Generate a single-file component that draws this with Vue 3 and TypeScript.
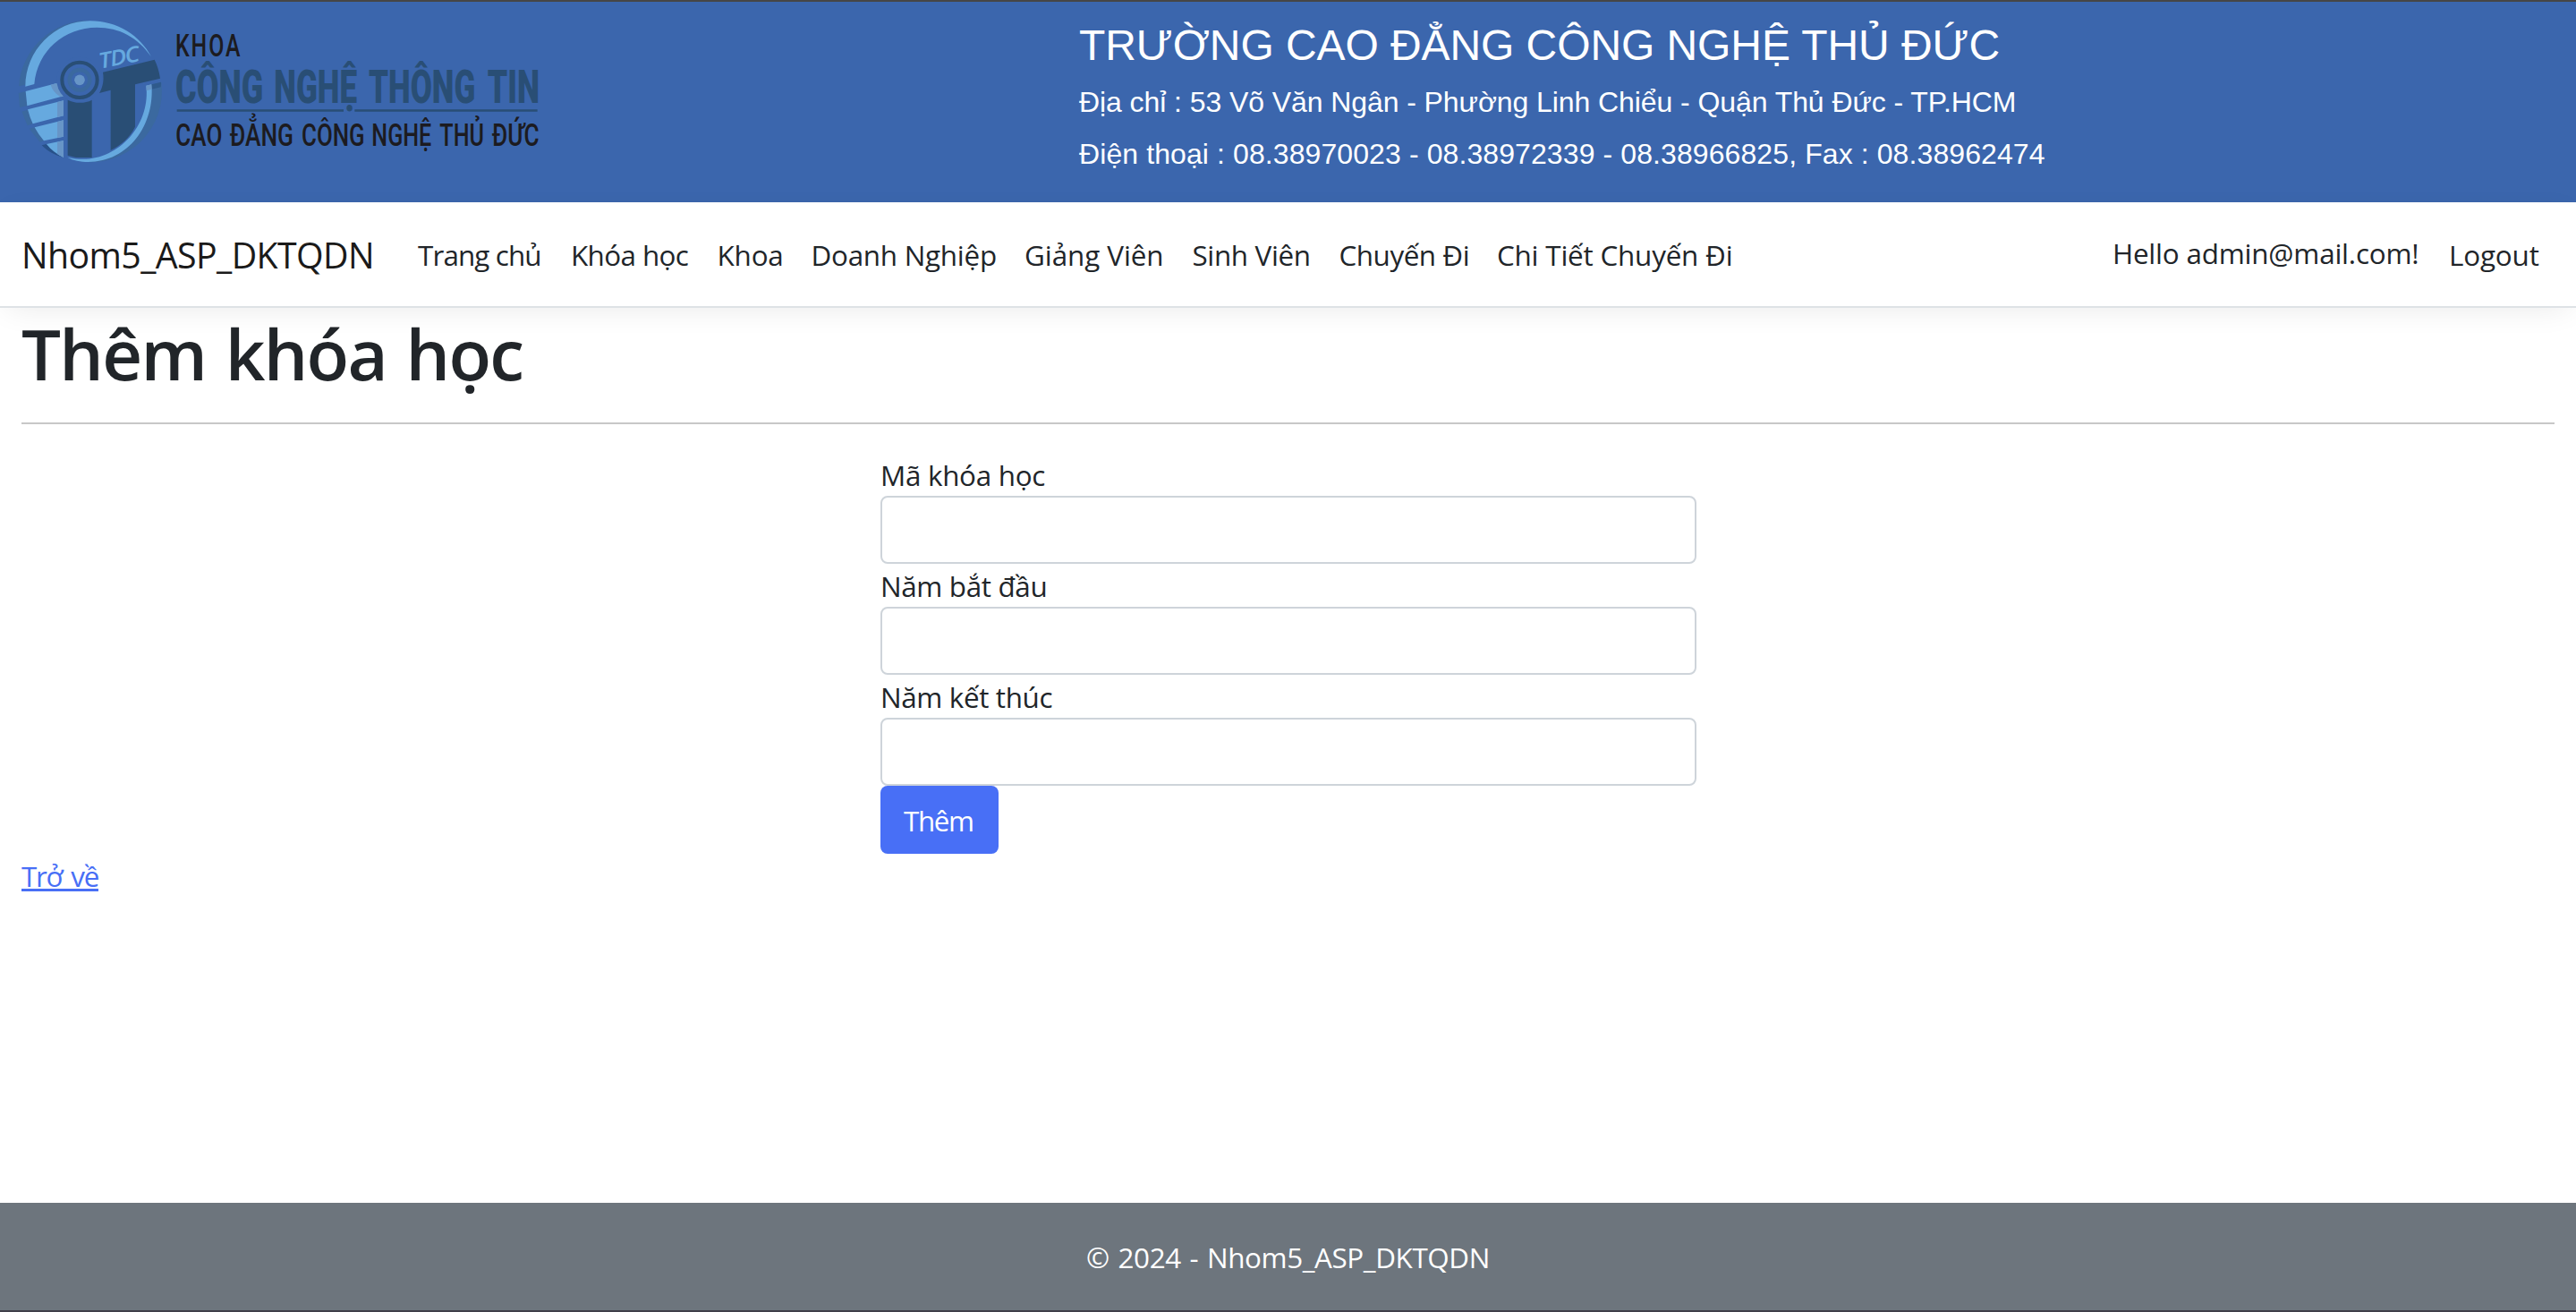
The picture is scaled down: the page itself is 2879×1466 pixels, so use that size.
<script setup lang="ts">
import { ref } from 'vue'

interface NavItem {
  label: string
  width: number
  spacing: number
}

interface Field {
  id: string
  label: string
  spacing: number
}

const navItems: NavItem[] = [
  { label: 'Trang chủ', width: 171, spacing: -0.87 },
  { label: 'Khóa học', width: 163.5, spacing: -0.61 },
  { label: 'Khoa', width: 105, spacing: -0.17 },
  { label: 'Doanh Nghiệp', width: 238.5, spacing: -0.26 },
  { label: 'Giảng Viên', width: 187.5, spacing: -0.06 },
  { label: 'Sinh Viên', width: 164, spacing: -0.34 },
  { label: 'Chuyến Đi', width: 176.5, spacing: -0.46 },
  { label: 'Chi Tiết Chuyến Đi', width: 296, spacing: -0.2 },
]

const fields: Field[] = [
  { id: 'ma', label: 'Mã khóa học', spacing: -0.29 },
  { id: 'bat-dau', label: 'Năm bắt đầu', spacing: -0.36 },
  { id: 'ket-thuc', label: 'Năm kết thúc', spacing: -0.36 },
]

const values = ref<Record<string, string>>({ ma: '', 'bat-dau': '', 'ket-thuc': '' })
</script>

<template>
  <div class="page">
    <header class="banner">
      <svg class="logo" viewBox="0 6 1920 672" role="img" aria-label="Khoa Công Nghệ Thông Tin">
        <!-- emblem rings -->
        <path fill="#3b699f" d="M63 289A239 238 0 0 1 302 68C200 80 100 150 86 284Z" />
        <path fill="#3b699f" d="M508 284L541 276A239 238 0 0 1 270 541C420 540 510 430 508 284Z" />
        <path fill="#66a9df" d="M85 290C85 170 182 70 302 70C395 70 470 120 507 190C462 125 400 92 325 92C215 92 125 170 115 282Z" />
        <path fill="#66a9df" d="M490 287L508 283C520 420 430 543 296 543C270 543 245 538 226 527C250 533 270 534 290 533C410 525 505 410 490 287Z" />
        <!-- left stripes -->
        <path fill="#3b699f" d="M62 312L86 306L91 355L66 360ZM73 374L93 368L110 415L92 421ZM98 432L116 427L147 472L134 476Z" />
        <path fill="#28528a" d="M140 487L156 483L213 528C184 520 160 508 140 487Z" />
        <path fill="#66a9df" d="M86 306L190 279L213 322L91 355ZM93 367L213 337V388L110 415Q100 394 93 367ZM116 427L213 403V458L147 472Q130 453 116 427ZM156 483L213 471V528C190 517 172 503 156 483Z" />
        <path fill="#6795c7" d="M170 284L190 279L213 322L206 325C190 318 175 303 170 284ZM192 342L213 337V388L192 393ZM192 408L213 403V458L192 462ZM192 476L213 471V528L192 516Z" />
        <!-- letter i -->
        <circle cx="267" cy="268" r="77" fill="#3b66ad" />
        <circle cx="267" cy="268" r="59" fill="none" stroke="#294e75" stroke-width="12" />
        <circle cx="267" cy="268" r="34" fill="none" stroke="#3b699f" stroke-width="13" />
        <circle cx="267" cy="268" r="17.500" fill="#6795c7" />
        <path fill="#294e75" d="M227 335C250 347 285 348 308 335V528H255L227 521Z" />
        <!-- letter T -->
        <path fill="#294e75" d="M345 242L518 200C528 220 534 240 537 263L453 283V425C435 462 405 487 371 504V302L333 312C346 290 349 266 345 242Z" />
        <path fill="#2f5a8c" d="M508 283L540 275L539 292L509 299Z" />
        <path fill="#6795c7" d="M490 287L508 283L509 299L491 304Z" />
        <g transform="translate(336 230) rotate(-11)">
          <text class="tdc" x="0" y="0" textLength="134" lengthAdjust="spacingAndGlyphs">TDC</text>
        </g>
        <!-- wordmark -->
        <text class="dark khoa" x="588" y="190" textLength="223" lengthAdjust="spacingAndGlyphs">KHOA</text>
        <g class="heavy">
          <text x="588" y="345" textLength="295" lengthAdjust="spacingAndGlyphs">CÔNG</text>
          <text x="919" y="345" textLength="278" lengthAdjust="spacingAndGlyphs">NGHỆ</text>
          <text x="1236" y="345" textLength="358" lengthAdjust="spacingAndGlyphs">THÔNG</text>
          <text x="1634" y="345" textLength="175" lengthAdjust="spacingAndGlyphs">TIN</text>
        </g>
        <path d="M593 370.500H1152M1189 370.500H1802" stroke="#294e75" stroke-width="7" />
        <g class="dark" font-size="103">
          <text x="589" y="490" textLength="156" lengthAdjust="spacingAndGlyphs">CAO</text>
          <text x="770" y="490" textLength="214" lengthAdjust="spacingAndGlyphs">ĐẲNG</text>
          <text x="1011" y="490" textLength="212" lengthAdjust="spacingAndGlyphs">CÔNG</text>
          <text x="1246" y="490" textLength="201" lengthAdjust="spacingAndGlyphs">NGHỆ</text>
          <text x="1474" y="490" textLength="149" lengthAdjust="spacingAndGlyphs">THỦ</text>
          <text x="1649" y="490" textLength="159" lengthAdjust="spacingAndGlyphs">ĐỨC</text>
        </g>
      </svg>
      <div class="school">
        <div class="school-name">TRƯỜNG CAO ĐẲNG CÔNG NGHỆ THỦ ĐỨC</div>
        <div class="school-line address">Địa chỉ : 53 Võ Văn Ngân - Phường Linh Chiểu - Quận Thủ Đức - TP.HCM</div>
        <div class="school-line phone">Điện thoại : 08.38970023 - 08.38972339 - 08.38966825, Fax : 08.38962474</div>
      </div>
    </header>

    <nav class="navbar">
      <a class="brand">Nhom5_ASP_DKTQDN</a>
      <ul class="nav-list">
        <li v-for="item in navItems" :key="item.label" :style="{ width: item.width + 'px' }">
          <a :style="{ letterSpacing: item.spacing + 'px' }">{{ item.label }}</a>
        </li>
      </ul>
      <div class="account">
        <span class="hello">Hello admin@mail.com!</span>
        <a class="logout">Logout</a>
      </div>
    </nav>

    <main class="content">
      <h1>Thêm khóa học</h1>
      <hr />
      <form class="form" @submit.prevent>
        <template v-for="field in fields" :key="field.id">
          <label :for="field.id" :style="{ letterSpacing: field.spacing + 'px' }">{{ field.label }}</label>
          <input :id="field.id" v-model="values[field.id]" type="text" />
        </template>
        <button type="submit">Thêm</button>
      </form>
      <a class="back">Trở về</a>
    </main>

    <footer class="footer">© 2024 - Nhom5_ASP_DKTQDN</footer>
  </div>
</template>

<style>
body {
  margin: 0;
  overflow: hidden;
}
</style>

<style scoped>
.page {
  box-sizing: border-box;
  width: 100%;
  height: 1466px;
  display: flex;
  flex-direction: column;
  border-top: 2px solid #464646;
  border-bottom: 2px solid #3f3f4a;
  background: #fff;
  color: #212529;
  font: 400 31.4px/48px "Open Sans", "Noto Sans", sans-serif;
}

.banner {
  flex: none;
  display: flex;
  height: 224px;
  background: #3b66ad;
}

.logo {
  display: block;
  flex: none;
  width: 640px;
  height: 224px;
  font-family: Roboto, sans-serif;
}

.tdc {
  font: italic 600 72px "Open Sans", sans-serif;
  letter-spacing: -4px;
  fill: #66a9df;
}

.dark {
  font-weight: 500;
  fill: #1c1b20;
}

.khoa {
  font-size: 105px;
  letter-spacing: 8px;
}

.heavy {
  font-size: 154px;
  font-weight: 900;
  fill: #294e75;
}

.school {
  margin-left: 566px;
  padding-top: 20px;
  color: #fff;
  font-family: "Liberation Sans", Arial, sans-serif;
  white-space: nowrap;
}

.school-name {
  height: 68px;
  font-size: 48px;
  line-height: 58px;
  letter-spacing: -0.08px;
}

.school-line {
  height: 58px;
  font-size: 32px;
  line-height: 48px;
}

.address {
  letter-spacing: -0.08px;
}

.phone {
  letter-spacing: 0.095px;
}

.navbar {
  flex: none;
  box-sizing: border-box;
  display: flex;
  align-items: center;
  height: 118px;
  padding: 2px 24px 0;
  border-bottom: 2px solid #dee2e6;
  box-shadow: 0 8px 32px -8px rgba(0, 0, 0, 0.09);
  white-space: nowrap;
}

.brand {
  width: 427px;
  font-size: 39.3px;
  line-height: 60px;
  letter-spacing: -0.6px;
  color: #1a1a1a;
}

.nav-list {
  flex: 1;
  display: flex;
  margin: 0;
  padding: 0;
  list-style: none;
}

.nav-list li {
  box-sizing: border-box;
  padding-left: 16px;
}

.account {
  display: flex;
  align-items: center;
}

.hello {
  width: 376px;
  padding-bottom: 4px;
  letter-spacing: -0.2px;
}

.logout {
  width: 118px;
  letter-spacing: -0.15px;
}

.content {
  flex: 1;
  padding: 3px 24px 0;
}

h1 {
  margin: 0;
  font-size: 78px;
  font-weight: 600;
  line-height: 96px;
  letter-spacing: -1.7px;
  word-spacing: 3px;
}

hr {
  margin: 29px 0 32px;
  border: 0;
  border-top: 2px solid #c8c8c8;
}

.form {
  display: flex;
  flex-direction: column;
  width: 912px;
  margin: 0 auto 0 960px;
}

label {
  height: 48px;
  line-height: 50px;
}

input {
  box-sizing: border-box;
  width: 912px;
  height: 76px;
  padding: 12px 24px;
  border: 2px solid #ced4da;
  border-radius: 8px;
  background: #fff;
  font: inherit;
  outline: none;
}

button {
  box-sizing: border-box;
  width: 132px;
  height: 76px;
  padding: 2px 0 0 26px;
  border: 0;
  border-radius: 8px;
  background: #486ff6;
  color: #fff;
  font: inherit;
  letter-spacing: -1.4px;
  text-align: left;
}

.back {
  display: block;
  width: max-content;
  height: 48px;
  line-height: 50px;
  letter-spacing: -1.3px;
  word-spacing: 3px;
  color: #486ff6;
  text-decoration: underline;
  text-decoration-thickness: 3px;
  text-underline-offset: 2px;
  text-decoration-skip-ink: none;
}

.footer {
  flex: none;
  height: 120px;
  line-height: 122px;
  background: #6d757d;
  color: #fff;
  letter-spacing: -0.4px;
  word-spacing: 2px;
  text-align: center;
}
</style>
